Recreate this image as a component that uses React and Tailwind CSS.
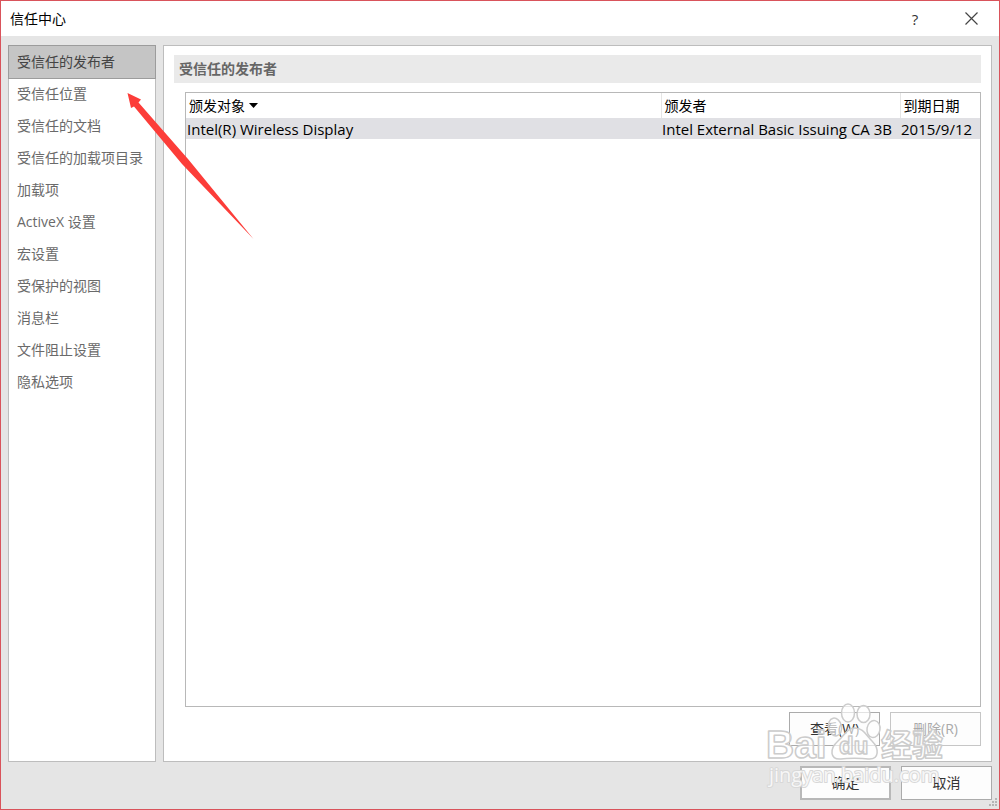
import { useState } from "react";

const sections = [
  "受信任的发布者",
  "受信任位置",
  "受信任的文档",
  "受信任的加载项目录",
  "加载项",
  "ActiveX 设置",
  "宏设置",
  "受保护的视图",
  "消息栏",
  "文件阻止设置",
  "隐私选项",
];

const publishers = [
  {
    subject: "Intel(R) Wireless Display",
    issuer: "Intel External Basic Issuing CA 3B",
    expires: "2015/9/12",
  },
];

function TitleBar() {
  return (
    <header className="flex h-[35px] shrink-0 items-center bg-white pl-[9px] text-black">
      <h1 className="grow">信任中心</h1>
      <button type="button" aria-label="帮助" className="h-full w-14 text-[15px] text-[#333]">
        ?
      </button>
      <button type="button" aria-label="关闭" className="flex h-full w-14 items-center justify-center text-[#444]">
        <svg width="13" height="13" viewBox="0 0 13 13" fill="none" stroke="currentColor" strokeWidth="1.2">
          <path d="M0.5 0.5 12.5 12.5M12.5 0.5 0.5 12.5" />
        </svg>
      </button>
    </header>
  );
}

function Sidebar({ current, onSelect }) {
  return (
    <nav className="w-[148px] shrink-0 border border-[#bdbdbd] bg-white">
      <ul>
        {sections.map((name) => (
          <li key={name}>
            <button
              type="button"
              onClick={() => onSelect(name)}
              className={
                name === current
                  ? "h-8 w-full bg-[#c5c5c5] pl-2 text-left text-[#444] outline outline-[#9c9c9c]"
                  : "h-8 w-full pl-2 text-left text-[#6a6a6a]"
              }
            >
              {name}
            </button>
          </li>
        ))}
      </ul>
    </nav>
  );
}

function PublisherTable() {
  return (
    <div className="grow border border-[#b8b8b8]">
      <table className="w-full table-fixed border-collapse text-left text-black">
        <colgroup>
          <col />
          <col className="w-[239px]" />
          <col className="w-20" />
        </colgroup>
        <thead>
          <tr className="h-[25px]">
            <th className="border-r border-[#e5e5e5] px-[3px] font-normal">
              <span className="flex items-center gap-1">
                颁发对象
                <svg width="9" height="5" viewBox="0 0 9 5" aria-hidden="true">
                  <path d="M0 0H9L4.500 5Z" fill="#000" />
                </svg>
              </span>
            </th>
            <th className="border-r border-[#e5e5e5] px-[3px] font-normal">颁发者</th>
            <th className="px-[3px] font-normal">到期日期</th>
          </tr>
        </thead>
        <tbody>
          {publishers.map((p) => (
            <tr key={p.subject} className="h-[21px] bg-[#e0e0e4] text-[15px] whitespace-nowrap">
              <td className="px-px">{p.subject}</td>
              <td className="px-px">{p.issuer}</td>
              <td className="px-px">{p.expires}</td>
            </tr>
          ))}
        </tbody>
      </table>
    </div>
  );
}

function Arrow() {
  return (
    <svg
      className="pointer-events-none absolute top-[91px] left-[125px]"
      width="130"
      height="150"
      viewBox="126 92 130 150"
      aria-hidden="true"
    >
      <path d="M127.500 93 141 99.500 138.500 102.500 188 159 253.500 239 182 164 134 106.500 131 108Z" fill="#fc3d39" />
    </svg>
  );
}

function Watermark() {
  return (
    <svg
      className="pointer-events-none absolute right-[49px] bottom-[15px]"
      width="190"
      height="94"
      viewBox="760 700 190 94"
      fill="#fff"
      fillOpacity="0.65"
      stroke="#cccccc"
      strokeWidth="1.5"
      strokeLinejoin="round"
    >
      <ellipse cx="848" cy="713" rx="6.500" ry="9" />
      <ellipse cx="863.500" cy="714" rx="6.500" ry="8.500" />
      <ellipse cx="835" cy="727" rx="6.500" ry="9" transform="rotate(-12 835 727)" />
      <ellipse cx="873.500" cy="729" rx="6.500" ry="8.500" transform="rotate(10 873.500 729)" />
      <path d="M855 728C847 728 845 735 838 741C829 749 830 760 841 759C847 758 862 758 868 759C880 760 879 748 872 741C866 735 863 728 855 728Z" />
      <g className="font-['Liberation_Sans','Noto_Sans_CJK_SC',sans-serif] font-bold">
        <text x="766" y="758" fontSize="39">Bai</text>
        <text x="839" y="754" fontSize="24">du</text>
        <text x="881" y="756" fontSize="31">经验</text>
      </g>
      <text
        x="769"
        y="782"
        fontSize="20"
        fillOpacity="0.8"
        stroke="#d8d8d8"
        strokeWidth="2"
        paintOrder="stroke"
        className="font-['Open_Sans',sans-serif]"
      >
        jingyan.baidu.com
      </text>
    </svg>
  );
}

function Grip() {
  return (
    <svg className="absolute right-px bottom-px" width="10" height="10" viewBox="0 0 10 10" fill="#b5b5b5" aria-hidden="true">
      <path d="M7 0h2v2h-2zM4 3h2v2h-2zM7 3h2v2h-2zM1 6h2v2h-2zM4 6h2v2h-2zM7 6h2v2h-2z" />
    </svg>
  );
}

export default function App() {
  const [current, setCurrent] = useState(sections[0]);
  return (
    <div className="relative flex min-h-screen flex-col border border-[#d9535b] bg-[#e5e5e5] font-['Open_Sans','Noto_Sans_CJK_SC',sans-serif] text-[14px] leading-5">
      <TitleBar />
      <div className="flex grow gap-[7px] px-[7px] pt-[9px]">
        <Sidebar current={current} onSelect={setCurrent} />
        <main className="flex min-w-0 grow flex-col border border-[#bdbdbd] bg-white px-[10px] pt-[9px] pb-[15px]">
          <h2 className="h-7 bg-[#eaeaea] pl-[5px] leading-7 font-bold text-[#666]">受信任的发布者</h2>
          <div className="flex grow flex-col gap-[5px] pt-[9px] pl-[11px]">
            <PublisherTable />
            <div className="flex justify-end gap-[10px]">
              <button type="button" className="h-[34px] w-[91px] border border-[#ababab] bg-[#fdfdfd] text-[#333]">
                查看(W)
              </button>
              <button type="button" disabled className="h-[34px] w-[91px] border border-[#c6c6c6] bg-[#fdfdfd] text-[#aaa]">
                删除(R)
              </button>
            </div>
          </div>
        </main>
      </div>
      <footer className="flex justify-end gap-[10px] px-[7px] pt-1 pb-[9px]">
        <button type="button" className="h-[34px] w-[91px] border-2 border-[#b8b8b8] bg-[#fdfdfd] text-[#333]">
          确定
        </button>
        <button type="button" className="h-[34px] w-[91px] border border-[#ababab] bg-[#fdfdfd] text-[#333]">
          取消
        </button>
      </footer>
      <Arrow />
      <Watermark />
      <Grip />
    </div>
  );
}
